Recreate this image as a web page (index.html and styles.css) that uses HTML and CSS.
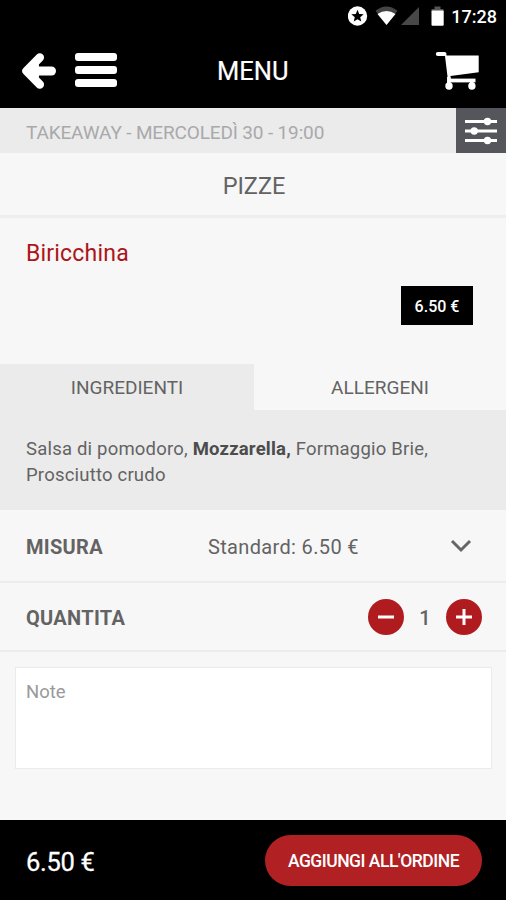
FILE: index.html
```html
<!DOCTYPE html>
<html lang="it">
<head>
    <meta charset="UTF-8">
    <meta name="viewport" content="width=device-width, initial-scale=1.0">
    <title>Menu - Biricchina</title>
    <link rel="stylesheet" href="styles.css">
</head>
<body>

    <div class="app">
        <!-- Status bar -->
        <div class="status-bar">
            <svg class="status-icons" width="100" height="24" viewBox="0 0 100 24">
                <circle cx="9.5" cy="12" r="9.7" fill="#fff"/>
                <path d="M9.500 5.800l1.700 4.200 4.500.3-3.500 2.900 1.100 4.400-3.800-2.400-3.800 2.400 1.100-4.400-3.500-2.900 4.500-.3z" fill="#000"/>
                <path d="M27.500 6.800Q38.500 -1.800 49.500 6.800L38.500 21z" fill="#444"/>
                <path d="M29.500 10Q38.500 3.800 47.500 10L38.500 21z" fill="#fff"/>
                <path d="M71 3v18H53z" fill="#484848"/>
                <path d="M86.500 2.500h6v2.500h3v3H83.500V5h3z" fill="#555"/>
                <rect x="83.500" y="6.500" width="12.200" height="15.300" rx="1" fill="#fff"/>
            </svg>
            <span class="clock">17:28</span>
        </div>

        <!-- Header -->
        <header class="header">
            <button class="icon-button back" aria-label="Indietro">
                <svg width="36" height="38" viewBox="0 0 36 38" fill="none" stroke="#fff" stroke-width="9" stroke-linecap="round" stroke-linejoin="round">
                    <path d="M8 20H30.500"/>
                    <path d="M18.800 6.600L5.500 20L18.800 33.500" stroke-width="8.500"/>
                    <path d="M15 15v10" stroke-width="6"/>
                </svg>
            </button>
            <button class="icon-button burger" aria-label="Menu">
                <span></span>
                <span></span>
                <span></span>
            </button>
            <h1>MENU</h1>
            <button class="icon-button cart" aria-label="Carrello">
                <svg width="45" height="40" viewBox="0 0 45 40">
                    <path d="M2.800 4H9.500" fill="none" stroke="#fff" stroke-width="4" stroke-linecap="round"/>
                    <path d="M8 2.500L11.800 5.500H43.700V22.300L15.500 26V29H12.800L10 6z" fill="#fff"/>
                    <path d="M13 30.500H40.500" stroke="#fff" stroke-width="3.800"/>
                    <path d="M13.800 27v7M36.700 31v4" stroke="#fff" stroke-width="3.500"/>
                    <circle cx="14" cy="36" r="3.700" fill="#fff"/>
                    <circle cx="36.900" cy="36" r="3.700" fill="#fff"/>
                </svg>
            </button>
        </header>

        <div class="order-info">
            <span class="when">TAKEAWAY - MERCOLEDÌ 30 - 19:00</span>
            <button class="filter" aria-label="Filtri">
                <svg width="34" height="28" viewBox="0 0 34 28" stroke="#fff" stroke-width="2.800" fill="#fff">
                    <path d="M1 4.500H33M1 14H33M1 23.500H33"/>
                    <g stroke="none">
                        <circle cx="23.500" cy="4.500" r="3.700"/>
                        <circle cx="10.200" cy="14" r="3.700"/>
                        <circle cx="23.500" cy="23.500" r="3.700"/>
                    </g>
                </svg>
            </button>
        </div>

        <h2 class="category">PIZZE</h2>

        <!-- Product -->
        <section class="product">
            <h3>Biricchina</h3>
            <span class="price">6.50 €</span>
        </section>

        <div class="tabs">
            <button class="tab active">INGREDIENTI</button>
            <button class="tab">ALLERGENI</button>
        </div>
        <p class="ingredients">Salsa di pomodoro, <b>Mozzarella,</b> Formaggio Brie,<br>Prosciutto crudo</p>

        <!-- Options -->
        <div class="row size">
            <strong>MISURA</strong>
            <span class="value">Standard: 6.50 €</span>
            <svg class="chevron" width="22" height="16" viewBox="0 0 22 16" fill="none" stroke="#666" stroke-width="3">
                <path d="M2 3L11 12L20 3"/>
            </svg>
        </div>
        <div class="row quantity">
            <strong>QUANTITA</strong>
            <div class="stepper">
                <button aria-label="Meno">
                    <svg width="16" height="16" viewBox="0 0 16 16" stroke="#fff" stroke-width="3"><path d="M0 8H16"/></svg>
                </button>
                <span>1</span>
                <button aria-label="Più">
                    <svg width="16" height="16" viewBox="0 0 16 16" stroke="#fff" stroke-width="3"><path d="M0 8H16M8 0V16"/></svg>
                </button>
            </div>
        </div>

        <textarea class="note" placeholder="Note"></textarea>

        <!-- Bottom bar -->
        <footer class="footer">
            <span class="total">6.50 €</span>
            <button class="add-button">AGGIUNGI ALL'ORDINE</button>
        </footer>
    </div>

</body>
</html>
```
FILE: styles.css
```css
* {
    margin: 0;
    padding: 0;
    box-sizing: border-box;
}

body {
    font-family: Roboto, sans-serif;
    background-color: #f7f7f7;
    color: #636363;
}

button {
    border: none;
    background: none;
    font: inherit;
    color: inherit;
    cursor: pointer;
}

svg {
    display: block;
}

.app {
    display: flex;
    flex-direction: column;
    width: 506px;
    height: 900px;
    overflow: hidden;
}

/* Status bar */
.status-bar {
    display: flex;
    align-items: center;
    justify-content: flex-end;
    gap: 3px;
    height: 32px;
    padding-right: 9px;
    background-color: #000;
    color: #fff;
}

.clock {
    font-size: 18px;
    font-weight: 500;
    line-height: 32px;
    padding-top: 1px;
}

/* Header */
.header {
    display: grid;
    grid-template-columns: 36px 42px 1fr 45px;
    align-items: center;
    height: 76px;
    padding: 0 26px 0 21px;
    background-color: #000;
    color: #fff;
}

.burger {
    display: flex;
    flex-direction: column;
    gap: 5px;
    margin: 0 -18px 1px 18px;
}

.burger span {
    height: 8px;
    border-radius: 3px;
    background-color: #fff;
}

.header h1 {
    font-size: 25.5px;
    font-weight: 400;
    margin-left: 118px;
    padding-top: 2px;
    -webkit-text-stroke: 0.2px #fff;
}

/* Takeaway bar */
.order-info {
    display: flex;
    align-items: center;
    justify-content: space-between;
    height: 45px;
    padding-left: 26px;
    background-color: #ebebeb;
    color: #a9a9ab;
    font-size: 19px;
}

.when {
    padding-top: 3px;
    letter-spacing: -0.15px;
}

.filter {
    display: flex;
    align-items: center;
    justify-content: center;
    width: 50px;
    height: 45px;
    background-color: #55565b;
}

.category {
    height: 65px;
    border-bottom: 3px solid #eee;
    font-size: 23.5px;
    font-weight: 400;
    line-height: 66px;
    text-align: center;
    padding-left: 2px;
}

/* Product */
.product {
    display: flex;
    flex-direction: column;
    height: 146px;
    padding: 22px 33px 0 26px;
}

.product h3 {
    color: #ad1519;
    font-size: 23px;
    font-weight: 400;
    line-height: 28px;
    letter-spacing: 0.2px;
}

.price {
    align-self: flex-end;
    width: 72px;
    height: 39px;
    margin-top: 18px;
    background-color: #000;
    color: #fff;
    font-size: 16px;
    font-weight: 500;
    line-height: 41px;
    text-align: center;
}

/* Tabs */
.tabs {
    display: grid;
    grid-template-columns: 254px 252px;
    height: 46px;
    font-size: 19px;
}

.tab.active {
    background-color: #ebebeb;
}

.ingredients {
    height: 100px;
    padding: 26px;
    background-color: #ebebeb;
    font-size: 18.5px;
    line-height: 26px;
    letter-spacing: 0.2px;
    white-space: nowrap;
}

.ingredients b {
    color: #4c4c4c;
}

/* Option rows */
.row {
    display: flex;
    align-items: center;
    border-bottom: 2px solid #ececec;
    padding: 0 24px 0 26px;
    font-size: 20px;
    letter-spacing: 0.3px;
}

.row strong {
    font-weight: 700;
}

.size {
    height: 73px;
    padding-top: 3px;
}

.value {
    margin-left: 105px;
    letter-spacing: 0.35px;
}

.chevron {
    margin: 0 10px 3px auto;
}

.quantity {
    height: 69px;
}

.quantity strong {
    padding-top: 2px;
}

.stepper {
    display: flex;
    align-items: center;
    margin-left: auto;
}

.stepper button {
    display: flex;
    align-items: center;
    justify-content: center;
    width: 36px;
    height: 36px;
    border-radius: 50%;
    background-color: #b01b1f;
}

.stepper span {
    width: 42px;
    padding-top: 2px;
    text-align: center;
    font-weight: 500;
}

/* Note */
.note {
    display: block;
    width: 477px;
    height: 102px;
    margin: 15px 0 0 15px;
    padding: 13px 10px;
    border: 1px solid #ebebeb;
    background-color: #fff;
    font-family: inherit;
    font-size: 18.5px;
    resize: none;
    outline: none;
}

.note::placeholder {
    color: #999;
}

/* Bottom bar */
.footer {
    display: flex;
    align-items: center;
    justify-content: space-between;
    height: 80px;
    margin-top: auto;
    padding: 0 24px 0 26px;
    background-color: #000;
    color: #fff;
}

.total {
    padding-top: 3px;
    font-size: 25.5px;
    font-weight: 400;
    letter-spacing: -0.3px;
    -webkit-text-stroke: 0.3px #fff;
}

.add-button {
    width: 217px;
    height: 51px;
    padding-top: 1px;
    border-radius: 26px;
    background-color: #b12124;
    font-size: 17.5px;
    font-weight: 500;
    letter-spacing: -0.5px;
}
```
